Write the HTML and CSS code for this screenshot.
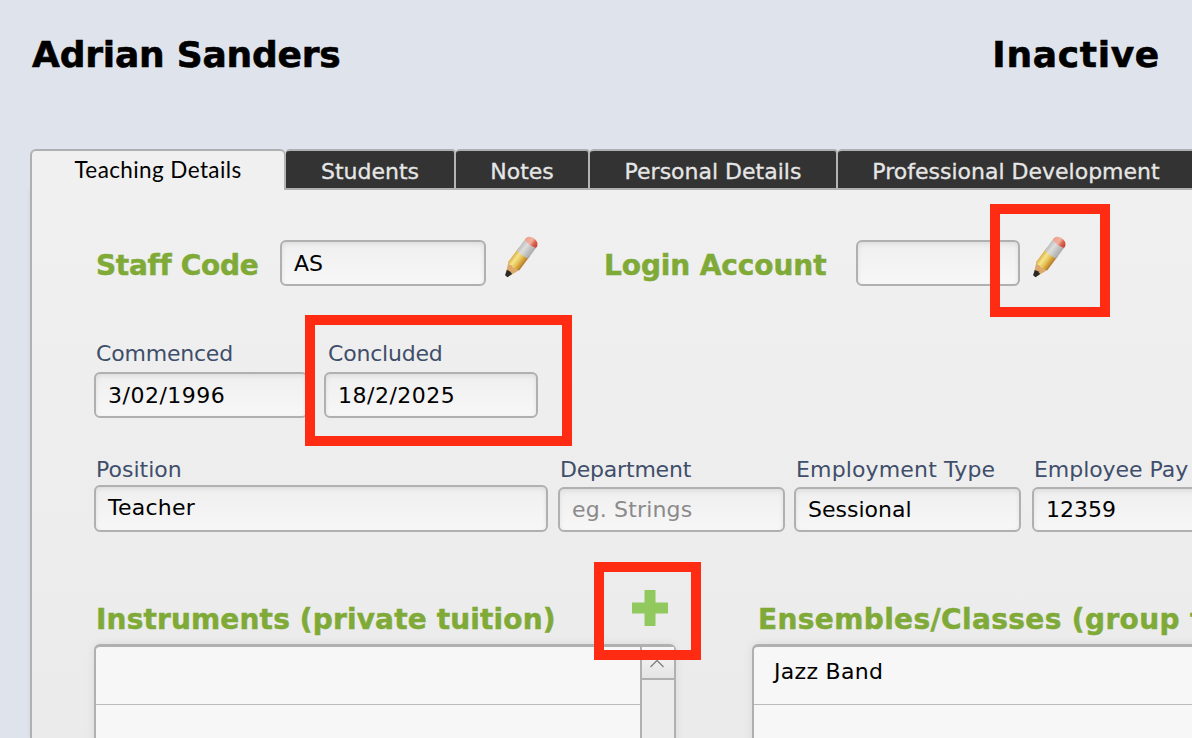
FILE: index.html
```html
<!DOCTYPE html>
<html lang="en">
<head>
  <meta charset="UTF-8">
  <meta name="viewport" content="width=device-width, initial-scale=1.0">
  <title>Adrian Sanders - Teaching Details</title>
  <link rel="stylesheet" href="styles.css">
</head>
<body>
  <!-- Gradients shared by the pencil icons -->
  <svg class="defs" width="0" height="0">
    <defs>
      <linearGradient id="wood" x1="0" y1="0" x2="1" y2="0">
        <stop offset="0" stop-color="#d9b04a"/>
        <stop offset="0.3" stop-color="#f5e58c"/>
        <stop offset="0.6" stop-color="#e6bf50"/>
        <stop offset="1" stop-color="#b5762a"/>
      </linearGradient>
      <linearGradient id="metal" x1="0" y1="0" x2="1" y2="0">
        <stop offset="0" stop-color="#bdbdbd"/>
        <stop offset="0.35" stop-color="#dedede"/>
        <stop offset="1" stop-color="#a9a9ab"/>
      </linearGradient>
      <linearGradient id="rubber" x1="0" y1="0" x2="1" y2="0">
        <stop offset="0" stop-color="#e9a08a"/>
        <stop offset="0.45" stop-color="#f3b09e"/>
        <stop offset="0.7" stop-color="#dc6352"/>
        <stop offset="1" stop-color="#c53a2e"/>
      </linearGradient>
      <g id="pencil" transform="translate(2.5 41) rotate(36.5)">
        <path d="M-1.500 0 L-7 -13 H7 L1.500 0 Z" fill="#dcaa6c"/>
        <path d="M-1.500 0.300 L-3.300 -5 Q0 -6.500 3.300 -5 L1.500 0.300 Z" fill="#2a2a2a"/>
        <path d="M-7 -12.5 Q-4 -9.500 -2 -12 Q1 -9 3 -11.8 Q5 -10.5 7 -12.5 V-30 H-7 Z" fill="url(#wood)"/>
        <path d="M-7 -27 Q0 -25 7 -27 V-40 H-7 Z" fill="url(#metal)"/>
        <path d="M-7 -40 Q0 -38 7 -40 V-42 Q5.500 -46.500 0 -46.500 Q-5.500 -46.500 -7 -42 Z" fill="url(#rubber)"/>
      </g>
    </defs>
  </svg>

  <header class="page-header">
    <h1 class="staff-name">Adrian Sanders</h1>
    <div class="staff-status">Inactive</div>
  </header>

  <nav class="tabs">
    <a class="tab active">Teaching Details</a>
    <a class="tab students">Students</a>
    <a class="tab notes">Notes</a>
    <a class="tab personal">Personal Details</a>
    <a class="tab professional">Professional Development</a>
  </nav>

  <main class="panel">
    <!-- Staff code and login -->
    <div class="row account-row">
      <span class="heading code-heading">Staff Code</span>
      <div class="input code-input">AS</div>
      <svg class="pencil" width="36" height="44" viewBox="0 0 36 44"><use href="#pencil"/></svg>
      <span class="heading login-heading">Login Account</span>
      <div class="input login-input"></div>
      <svg class="pencil" width="36" height="44" viewBox="0 0 36 44"><use href="#pencil"/></svg>
      <div class="highlight highlight-login"></div>
    </div>

    <!-- Dates -->
    <div class="row date-row">
      <div class="field">
        <span class="label">Commenced</span>
        <div class="input">3/02/1996</div>
      </div>
      <div class="field">
        <span class="label concluded-label">Concluded</span>
        <div class="input">18/2/2025</div>
      </div>
      <div class="highlight highlight-date"></div>
    </div>

    <!-- Employment -->
    <div class="row job-row">
      <div class="field position-field">
        <span class="label">Position</span>
        <div class="input">Teacher</div>
      </div>
      <div class="field department-field">
        <span class="label">Department</span>
        <div class="input placeholder">eg. Strings</div>
      </div>
      <div class="field type-field">
        <span class="label type-label">Employment Type</span>
        <div class="input">Sessional</div>
      </div>
      <div class="field">
        <span class="label pay-label">Employee Pay</span>
        <div class="input">12359</div>
      </div>
    </div>

    <!-- Instruments and ensembles -->
    <div class="row list-row">
      <section class="instruments">
        <div class="list-head">
          <span class="heading instruments-heading">Instruments (private tuition)</span>
          <svg class="plus" width="36" height="36" viewBox="0 0 36 36"><path d="M12.500 0h11v12.500H36v11H23.500V36h-11V23.500H0v-11h12.500z" fill="#91c95f"/></svg>
        </div>
        <div class="list">
          <div class="list-items">
            <div class="item"></div>
            <div class="item"></div>
          </div>
          <div class="scrollbar">
            <div class="scroll-up">
              <svg width="16" height="9" viewBox="0 0 16 9"><path d="M1.500 8 8 1.500 14.500 8" fill="none" stroke="#808080" stroke-width="1.300"/></svg>
            </div>
          </div>
        </div>
        <div class="highlight highlight-add"></div>
      </section>
      <section class="ensembles">
        <div class="list-head">
          <span class="heading ensembles-heading">Ensembles/Classes (group tuition)</span>
        </div>
        <div class="list">
          <div class="list-items">
            <div class="item">Jazz Band</div>
            <div class="item"></div>
          </div>
        </div>
      </section>
    </div>
  </main>
</body>
</html>
```
FILE: styles.css
```css
* {
  box-sizing: border-box;
}

body {
  margin: 0;
  width: 1192px;
  height: 738px;
  overflow: hidden;
  background: #dfe4ec;
  color: #000;
  font-family: Verdana, "DejaVu Sans", sans-serif;
  font-size: 22px;
  white-space: nowrap;
}

.defs {
  display: block;
}

/* Name and status */
.page-header {
  display: flex;
  justify-content: space-between;
  align-items: flex-start;
  height: 149px;
  padding: 32px 32px 0 32px;
  font-size: 36px;
  font-weight: bold;
  line-height: 46px;
}

.staff-name {
  margin: 0;
  font-size: 36px;
  letter-spacing: -0.2px;
  -webkit-text-stroke: 0.6px;
}

.staff-status {
  letter-spacing: 0.7px;
  -webkit-text-stroke: 0.6px;
}

/* Tabs */
.tabs {
  display: flex;
  position: relative;
  z-index: 1;
  width: 1162px;
  height: 41px;
  margin-left: 30px;
  overflow: hidden;
}

.tab {
  flex: none;
  width: 134px;
  border-top: 2px solid #aeb0b2;
  border-right: 2px solid #b4b4b4;
  border-bottom: 2px solid #b0b0b0;
  border-radius: 4px 4px 0 0;
  background: #333;
  color: #e6e6e6;
  line-height: 41px;
  text-align: center;
  -webkit-text-stroke: 0.3px;
}

.tab.active {
  width: 256px;
  border-left: 2px solid #b0b0b0;
  border-bottom: 0;
  border-radius: 6px 6px 0 0;
  background: #f0f0f0;
  color: #000;
  font-family: Avenir, Lato, sans-serif;
  font-size: 22.5px;
  letter-spacing: 0.4px;
  line-height: 37px;
  -webkit-text-stroke: 0;
}

.tab.students {
  width: 170px;
}

.tab.personal {
  width: 248px;
}

.tab.professional {
  width: 358px;
}

/* Panel */
.panel {
  width: 1162px;
  height: 548px;
  margin-left: 30px;
  padding: 50px 0 0 62px;
  overflow: hidden;
  border-left: 2px solid #b0b0b0;
  background: linear-gradient(#f0f0f0, #ebebeb);
  box-shadow: 0 0 6px rgba(0, 0, 0, 0.06);
}

.row {
  display: flex;
  position: relative;
}

.row > * {
  flex: none;
}

.heading {
  color: #80aa38;
  font-size: 28px;
  font-weight: bold;
  letter-spacing: -0.1px;
  line-height: 36px;
  -webkit-text-stroke: 0.5px;
}

.label {
  display: block;
  padding-left: 2px;
  color: #3f4e6b;
  letter-spacing: -0.2px;
  line-height: 28px;
}

.input {
  width: 214px;
  height: 46px;
  padding-left: 12px;
  border: 2px solid #b0b0b0;
  border-radius: 6px;
  background: linear-gradient(#efefef, #f7f7f7);
  box-shadow: inset 0 2px 5px rgba(0, 0, 0, 0.08);
  line-height: 43px;
}

.placeholder {
  color: #8a8a8a;
  letter-spacing: 0.15px;
}

.account-row {
  height: 113px;
}

.code-heading,
.login-heading {
  padding: 8px 0 0 2px;
}

.code-heading {
  width: 186px;
  letter-spacing: -0.3px;
}

.code-input {
  width: 206px;
}

.login-heading {
  width: 254px;
  margin-left: 62px;
}

.login-input {
  width: 164px;
}

.pencil {
  margin: -5px 0 0 18px;
}

.login-input + .pencil {
  margin-left: 12px;
}

.date-row {
  gap: 16px;
  height: 116px;
  padding-top: 23px;
  margin-top: -36px;
}

.date-row .input {
  margin-top: 4px;
  letter-spacing: 0.5px;
}

.label.concluded-label {
  padding-left: 4px;
}

.job-row {
  gap: 10px;
  height: 154px;
  padding-top: 23px;
}

.job-row .input {
  width: 227px;
  height: 45px;
  margin-top: 3px;
  line-height: 41px;
}

.job-row .position-field .input {
  width: 454px;
  height: 47px;
  margin-top: 1px;
  letter-spacing: 0.25px;
}

.job-row .position-field .label {
  letter-spacing: 0;
}

.job-row .department-field {
  width: 226px;
}

.job-row .type-field {
  width: 228px;
}

.label.type-label {
  letter-spacing: 0.15px;
}

.label.pay-label {
  letter-spacing: -0.05px;
}

/* Lists */
.list-row {
  gap: 76px;
}

.instruments,
.ensembles {
  position: relative;
  width: 582px;
}

.ensembles {
  width: 364px;
}

.list-head {
  display: flex;
  height: 57px;
  padding-left: 2px;
}

.list-head .heading {
  flex: none;
  width: 536px;
  padding-top: 15px;
}

.list-head .instruments-heading {
  letter-spacing: 0.15px;
}

.list-head .ensembles-heading {
  width: 432px;
  padding-left: 4px;
  letter-spacing: 0.37px;
}

.plus {
  margin-top: 3px;
}

.list {
  display: flex;
  height: 110px;
  border: 2px solid #b0b0b0;
  border-top-width: 3px;
  border-radius: 6px;
  background: #f7f7f7;
  box-shadow: 0 0 10px rgba(0, 0, 0, 0.08);
}

.ensembles .list {
  width: 582px;
}

.list-items {
  flex: 1;
}

.item {
  height: 58px;
  padding-left: 20px;
  border-bottom: 1px solid #bababa;
  letter-spacing: 0.3px;
  line-height: 49px;
}

.scrollbar {
  width: 34px;
  border-left: 2px solid #b0b0b0;
  background: #ececec;
}

.scroll-up {
  height: 33px;
  padding: 12px 0 0 7px;
  border-bottom: 2px solid #b0b0b0;
  background: linear-gradient(#f7f7f7, #e4e4e4);
  line-height: 0;
}

/* Red callout boxes drawn over the form */
.highlight {
  position: absolute;
  z-index: 2;
  border: 10px solid #ff2b12;
}

.highlight-login {
  top: -36px;
  left: 896px;
  width: 120px;
  height: 113px;
}

.highlight-date {
  top: -2px;
  left: 211px;
  width: 267px;
  height: 131px;
}

.highlight-add {
  top: -25px;
  left: 500px;
  width: 107px;
  height: 98px;
}
```
